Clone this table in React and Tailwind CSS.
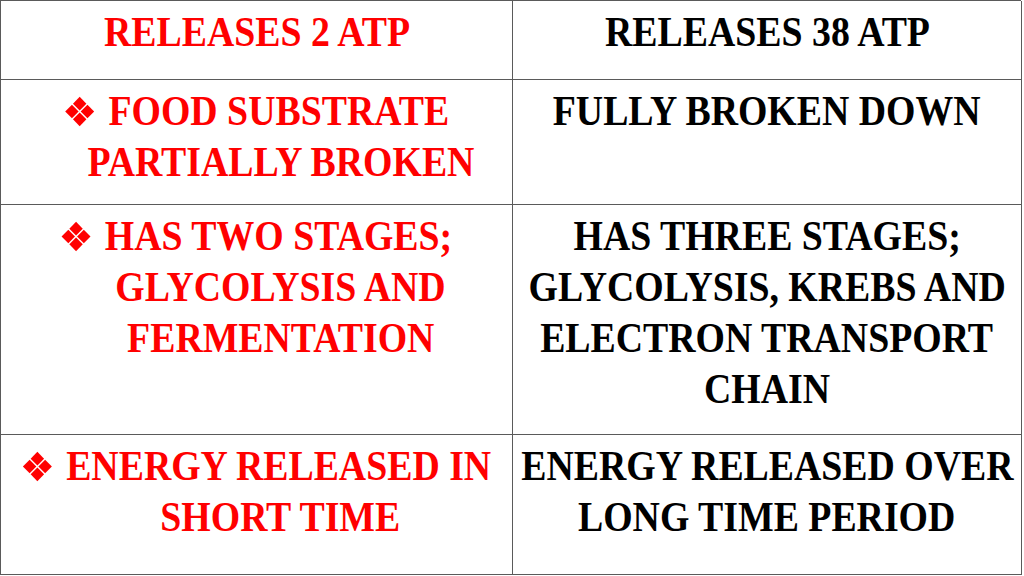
import React from 'react';

const Bullet = () => (
  <svg width="34" height="31" viewBox="0 0 30 30" preserveAspectRatio="none" className="mr-[15px] shrink-0">
    <polygon points="15,0.8 21.6,7.4 15,14 8.4,7.4" fill="#ff0000" />
    <polygon points="0.8,15 7.4,8.4 14,15 7.4,21.6" fill="#ff0000" />
    <polygon points="29.2,15 22.6,8.4 16,15 22.6,21.6" fill="#ff0000" />
    <polygon points="15,29.2 21.6,22.6 15,16 8.4,22.6" fill="#ff0000" />
  </svg>
);

function Line({ children, bullet, indent }) {
  return (
    <div className={`flex justify-center h-[51px] ${indent ? 'pl-[48px]' : ''}`}>
      <span className="flex items-center whitespace-nowrap scale-x-90">
        {bullet && <Bullet />}
        {children}
      </span>
    </div>
  );
}

function Cell({ lines, red }) {
  return (
    <div
      className={`border-r border-b border-[#5a5a5a] pt-[6px] text-[42px] leading-[51px] font-bold overflow-hidden ${
        red ? 'text-[#ff0000]' : 'text-black'
      }`}
    >
      {lines.map((l, i) => (
        <Line key={i} bullet={l.bullet} indent={l.indent}>
          {l.text}
        </Line>
      ))}
    </div>
  );
}

const rows = [
  {
    left: [{ text: 'RELEASES 2 ATP' }],
    right: [{ text: 'RELEASES 38 ATP' }],
  },
  {
    left: [
      { text: 'FOOD SUBSTRATE', bullet: true },
      { text: 'PARTIALLY BROKEN', indent: true },
    ],
    right: [{ text: 'FULLY BROKEN DOWN' }],
  },
  {
    left: [
      { text: 'HAS TWO STAGES;', bullet: true },
      { text: 'GLYCOLYSIS AND', indent: true },
      { text: 'FERMENTATION', indent: true },
    ],
    right: [
      { text: 'HAS THREE STAGES;' },
      { text: 'GLYCOLYSIS, KREBS AND' },
      { text: 'ELECTRON TRANSPORT' },
      { text: 'CHAIN' },
    ],
  },
  {
    left: [
      { text: 'ENERGY RELEASED IN', bullet: true },
      { text: 'SHORT TIME', indent: true },
    ],
    right: [{ text: 'ENERGY RELEASED OVER' }, { text: 'LONG TIME PERIOD' }],
  },
];

export default function App() {
  return (
    <div className="w-[1024px] h-[576px] bg-white overflow-hidden" style={{ fontFamily: '"Liberation Serif", serif' }}>
      <div className="w-[1021px] grid grid-cols-[512px_509px] grid-rows-[79px_125px_230px_140px] border-l border-t border-[#5a5a5a]">
        {rows.map((r, i) => (
          <React.Fragment key={i}>
            <Cell lines={r.left} red />
            <Cell lines={r.right} />
          </React.Fragment>
        ))}
      </div>
    </div>
  );
}
